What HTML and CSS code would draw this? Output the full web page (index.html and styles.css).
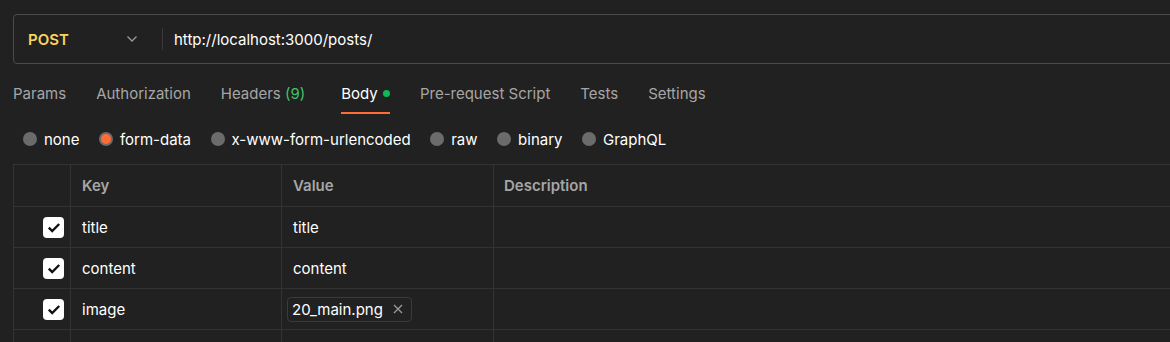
FILE: index.html
```html
<!DOCTYPE html>
<html>
<head>
<meta charset="utf-8">
<link rel="stylesheet" href="styles.css">
</head>
<body>
<div class="page">
  <div class="urlbar">
    <div class="method">
      <span class="method-name">POST</span>
      <svg class="chev" width="12" height="8" viewBox="0 0 12 8"><path d="M1.5 1.5 L6 6 L10.5 1.5" fill="none" stroke="#9a9a9a" stroke-width="1.3"/></svg>
    </div>
    <div class="divider"></div>
    <div class="url">http://localhost:3000/posts/</div>
  </div>

  <div class="tabs">
    <div class="tab">Params</div>
    <div class="tab">Authorization</div>
    <div class="tab">Headers <span class="count">(9)</span></div>
    <div class="tab active">Body <span class="dot"></span></div>
    <div class="tab">Pre-request Script</div>
    <div class="tab">Tests</div>
    <div class="tab">Settings</div>
  </div>

  <div class="radios">
    <div class="radio"><span class="circle"></span>none</div>
    <div class="radio"><span class="circle on"></span>form-data</div>
    <div class="radio"><span class="circle"></span>x-www-form-urlencoded</div>
    <div class="radio"><span class="circle"></span>raw</div>
    <div class="radio"><span class="circle"></span>binary</div>
    <div class="radio"><span class="circle"></span>GraphQL</div>
  </div>

  <div class="table">
    <div class="row head">
      <div class="cell chk"></div>
      <div class="cell key">Key</div>
      <div class="cell val">Value</div>
      <div class="cell desc">Description</div>
    </div>
    <div class="row">
      <div class="cell chk"><span class="box"><svg width="14" height="11" viewBox="0 0 14 11"><path d="M1.8 5.6 L5.2 9 L12.2 2" fill="none" stroke="#111" stroke-width="2.4"/></svg></span></div>
      <div class="cell key">title</div>
      <div class="cell val">title</div>
      <div class="cell desc"></div>
    </div>
    <div class="row">
      <div class="cell chk"><span class="box"><svg width="14" height="11" viewBox="0 0 14 11"><path d="M1.8 5.6 L5.2 9 L12.2 2" fill="none" stroke="#111" stroke-width="2.4"/></svg></span></div>
      <div class="cell key">content</div>
      <div class="cell val">content</div>
      <div class="cell desc"></div>
    </div>
    <div class="row">
      <div class="cell chk"><span class="box"><svg width="14" height="11" viewBox="0 0 14 11"><path d="M1.8 5.6 L5.2 9 L12.2 2" fill="none" stroke="#111" stroke-width="2.4"/></svg></span></div>
      <div class="cell key">image</div>
      <div class="cell val file-cell"><span class="file">20_main.png<svg class="x" width="10" height="10" viewBox="0 0 10 10"><path d="M1 1 L9 9 M9 1 L1 9" stroke="#9a9a9a" stroke-width="1.3"/></svg></span></div>
      <div class="cell desc"></div>
    </div>
    <div class="row">
      <div class="cell chk"></div>
      <div class="cell key"></div>
      <div class="cell val"></div>
      <div class="cell desc"></div>
    </div>
  </div>
</div>
</body>
</html>
```

FILE: styles.css
```css
html, body {
  margin: 0;
  padding: 0;
  background: #212121;
  overflow: hidden;
}
body {
  font-family: Inter, "Noto Sans", sans-serif;
  font-size: 15px;
  color: #ffffff;
}
.page {
  padding: 14px 0 0 13px;
  width: 1200px;
}
.urlbar {
  display: flex;
  align-items: center;
  height: 48px;
  border: 1px solid #4b4b4b;
  border-radius: 4px;
}
.method {
  display: flex;
  align-items: center;
  justify-content: space-between;
  width: 110px;
  padding-left: 14px;
  padding-right: 24px;
}
.method-name {
  color: #f8d45c;
  font-weight: 600;
}
.chev {
  display: block;
}
.divider {
  width: 1px;
  height: 22px;
  background: #3a3a3a;
  margin-right: 11px;
}
.url {
  color: #ffffff;
}
.tabs {
  display: flex;
  margin-top: 10px;
  height: 40px;
}
.tab {
  display: flex;
  align-items: center;
  color: #a6a6a6;
  margin-right: 30px;
  box-sizing: border-box;
  border-bottom: 2px solid transparent;
  padding-top: 1px;
  white-space: pre;
}
.tab:nth-child(3) {
  margin-right: 36px;
}
.tab.active {
  color: #ffffff;
  border-bottom-color: #ff6c37;
}
.count {
  color: #3ec26f;
}
.dot {
  display: inline-block;
  width: 7px;
  height: 7px;
  border-radius: 50%;
  background: #0cbb52;
  margin-left: 1px;
}
.radios {
  display: flex;
  align-items: center;
  height: 50px;
  padding-left: 10px;
}
.radio {
  display: flex;
  align-items: center;
  margin-right: 19.5px;
  color: #ffffff;
}
.circle {
  width: 14px;
  height: 14px;
  border-radius: 50%;
  background: #6b6b6b;
  margin-right: 7px;
  box-sizing: border-box;
}
.circle.on {
  background: #ff6c37;
  border: 2px solid #6b6b6b;
}
.table {
  border-top: 1px solid #333333;
  border-left: 1px solid #333333;
}
.row {
  display: flex;
  height: 41px;
  box-sizing: border-box;
  border-bottom: 1px solid #333333;
}
.row.head {
  height: 42px;
}
.row:last-child {
  border-bottom: none;
}
.cell {
  display: flex;
  align-items: center;
  box-sizing: border-box;
  border-right: 1px solid #333333;
  padding-left: 11px;
}
.chk {
  width: 57px;
  justify-content: flex-end;
  padding-right: 6px;
}
.key {
  width: 211px;
}
.val {
  width: 212px;
}
.desc {
  flex: 1;
  border-right: none;
  padding-left: 10px;
}
.head .cell {
  color: #a6a6a6;
  font-weight: 600;
}
.box {
  width: 21px;
  height: 21px;
  background: #ffffff;
  border-radius: 4px;
  display: flex;
  align-items: center;
  justify-content: center;
}
.file-cell {
  padding-left: 5px;
}
.file {
  display: flex;
  align-items: center;
  height: 23px;
  padding: 0 8px 0 4px;
  border: 1px solid #3a3a3a;
  border-radius: 4px;
}
.x {
  margin-left: 10px;
}
```
